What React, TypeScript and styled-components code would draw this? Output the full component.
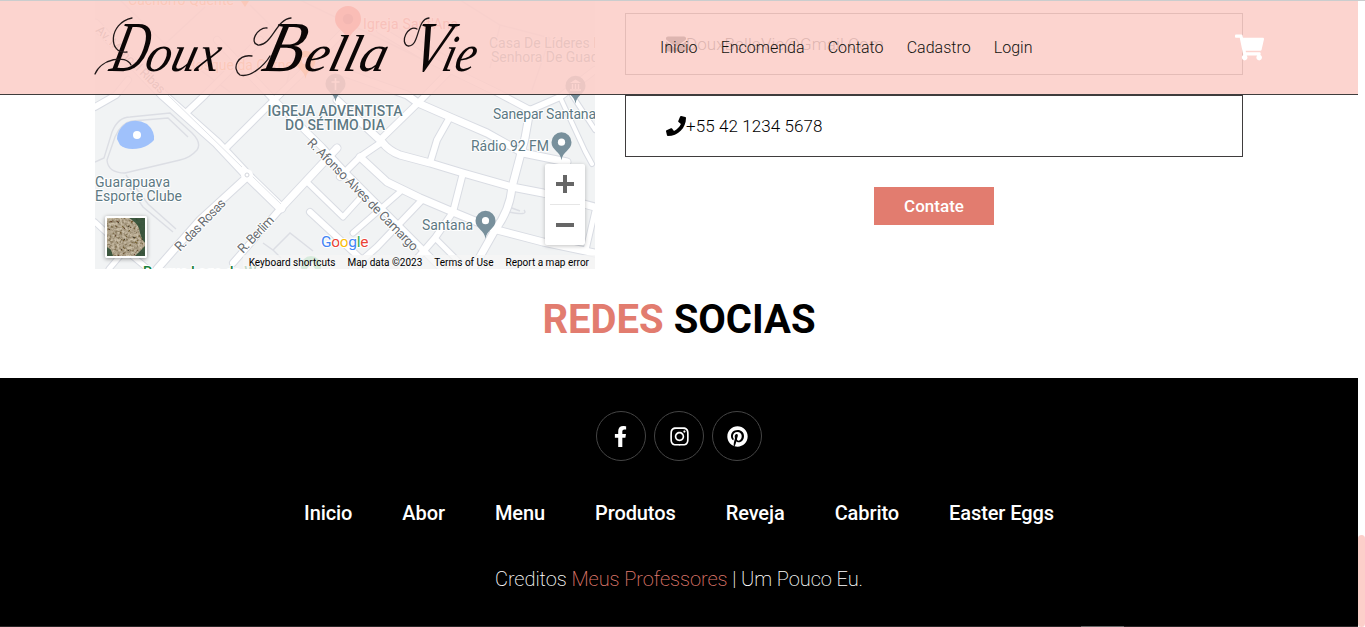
import React from 'react';
import styled, { createGlobalStyle } from 'styled-components';
import {
  FaEnvelope,
  FaFacebookF,
  FaInstagram,
  FaPhone,
  FaPinterest,
  FaShoppingCart,
} from 'react-icons/fa';

const GlobalStyle = createGlobalStyle`
  * { box-sizing: border-box; margin: 0; padding: 0; }
  html, body { height: 627px; overflow: hidden; }
  body { background: #fff; font-family: Roboto, sans-serif; color: #000; }
  a { text-decoration: none; color: inherit; }
`;

const Window = styled.div`
  position: relative;
  display: flex;
  width: 1365px;
  height: 627px;
  border-top: 1px solid #cacdce;
  overflow: hidden;
`;

const Page = styled.div`
  width: 1358px;
  display: flex;
  flex-direction: column;
`;

const ScrollTrack = styled.div`
  width: 7px;
  padding-top: 534px;
  background: #fff;
`;

const ScrollThumb = styled.div`
  height: 92px;
  border-radius: 4px;
  background: #fccfca;
`;

const Header = styled.header`
  position: absolute;
  top: 0;
  left: 0;
  width: 1358px;
  height: 94px;
  display: flex;
  align-items: center;
  padding: 0 94.5px 0 88px;
  background: rgba(252, 206, 200, 0.88);
  border-bottom: 1px solid #3f3c3d;
`;

const Logo = styled.svg`
  width: 400px;
  height: 80px;
  flex: none;
`;

const Nav = styled.nav`
  display: flex;
  gap: 23.2px;
  margin-left: 172px;
  font-size: 16px;
  font-weight: 300;
  color: #13130f;
`;

const Cart = styled.a`
  display: flex;
  margin-left: auto;
  color: #fff;
  font-size: 29px;
`;

const Contact = styled.section`
  display: flex;
  height: 268px;
  padding-left: 95px;
`;

const MapPanel = styled.div`
  position: relative;
  width: 500px;
  height: 268px;
  overflow: hidden;
  background: #f1f3f4;
`;

const MapDrawing = styled.svg`
  display: block;
  width: 500px;
  height: 268px;
`;

const MapFooter = styled.div`
  position: absolute;
  right: 0;
  bottom: 0;
  height: 14px;
  display: flex;
  align-items: center;
  gap: 12px;
  padding: 0 6px;
  background: rgba(245, 245, 245, 0.75);
  font-size: 10px;
  white-space: nowrap;
`;

const Satellite = styled.svg`
  position: absolute;
  left: 10px;
  top: 215px;
  width: 42px;
  height: 42px;
  border: 2px solid #fff;
  border-radius: 2px;
  box-shadow: 0 1px 4px rgba(0, 0, 0, 0.4);
`;

const ZoomControl = styled.div`
  position: absolute;
  left: 450px;
  top: 163px;
  width: 40px;
  height: 81px;
  display: flex;
  flex-direction: column;
  align-items: center;
  background: #fff;
  border-radius: 2px;
  box-shadow: 0 1px 4px rgba(0, 0, 0, 0.25);
`;

const ZoomButton = styled.button`
  width: 40px;
  height: 40px;
  border: 0;
  background: none;
  display: flex;
  align-items: center;
  justify-content: center;
`;

const ZoomRule = styled.div`
  width: 30px;
  height: 1px;
  background: #e6e6e6;
`;

const Form = styled.div`
  width: 618px;
  margin-left: 30px;
  padding-top: 12px;
  display: flex;
  flex-direction: column;
  align-items: center;
`;

const Field = styled.div`
  width: 618px;
  height: 62px;
  margin-bottom: 20px;
  padding-left: 40px;
  display: flex;
  align-items: center;
  border: 1px solid #3f3c3d;
  font-size: 17px;
  letter-spacing: 0.08px;
  font-weight: 300;

  svg {
    font-size: 20px;
  }
`;

const Submit = styled.button`
  width: 120px;
  height: 38px;
  margin-top: 10px;
  border: 0;
  background: #e27c6f;
  color: #fff;
  font: 500 17px Roboto, sans-serif;
`;

const Title = styled.h2`
  height: 109px;
  padding-top: 27px;
  text-align: center;
  font-size: 40px;
  line-height: 48px;
  font-weight: 700;
`;

const Accent = styled.span`
  color: #e27c6f;
`;

const Footer = styled.footer`
  flex: 1;
  display: flex;
  flex-direction: column;
  align-items: center;
  background: #000;
  color: #fff;
  padding-top: 33px;
`;

const Socials = styled.div`
  display: flex;
  gap: 8px;
`;

const Social = styled.a<{ $nudge?: boolean }>`
  width: 50px;
  height: 50px;
  display: flex;
  align-items: center;
  justify-content: center;
  padding-right: ${(p) => (p.$nudge ? 1 : 0)}px;
  border: 1px solid #454545;
  border-radius: 50%;
  font-size: 21px;
`;

const FooterNav = styled.nav`
  display: flex;
  gap: 50px;
  margin-top: 40px;
  font-size: 20px;
  line-height: 24px;
  font-weight: 500;
  letter-spacing: -0.09px;
`;

const Credit = styled.p`
  margin-top: 42px;
  font-size: 20px;
  line-height: 24px;
  font-weight: 200;
  letter-spacing: -0.07px;
`;

const BottomEdge = styled.div`
  width: 100%;
  height: 1px;
  margin-top: auto;
  padding-left: 1081px;
  background: #292526;
`;

const BottomMark = styled.div`
  width: 43px;
  height: 1px;
  background: #656565;
`;

const roads: { d: string; w: number }[] = [
  { d: 'M95 107L116 95L128 80', w: 6 },
  { d: 'M95 24L163 95L217 143L247 175L281 208', w: 9 },
  { d: 'M187 112L205 95L260 40', w: 6 },
  { d: 'M227 147L274 100L305 70L345 30', w: 6 },
  { d: 'M217 40L274 100L322 147L345 172L420 247L442 269', w: 6 },
  { d: 'M247 177L200 220L157 269', w: 7 },
  { d: 'M281 208L323 163L337 148', w: 7 },
  { d: 'M281 208L233 263', w: 6 },
  { d: 'M307 182L343 217L362 196', w: 5 },
  { d: 'M310 212L375 272', w: 6 },
  { d: 'M337 100L382 142Q389 151 400 155L430 163L463 173L512 187L543 193L595 207', w: 7 },
  { d: 'M380 140L418 103L470 50', w: 6 },
  { d: 'M337 70L407 95L418 103L450 117L487 133L523 153L567 162', w: 7 },
  { d: 'M380 30L430 60L498 93L530 110L560 97L595 70', w: 6 },
  { d: 'M530 110L525 138L512 187Q510 210 495 230L473 269', w: 7 },
  { d: 'M450 117L437 140L430 163', w: 6 },
  { d: 'M340 177L360 157L382 142', w: 6 },
  { d: 'M360 157L387 182L420 198L453 212L497 230L543 242L595 253', w: 7 },
  { d: 'M463 173L453 212L435 238L408 269', w: 6 },
  { d: 'M435 238L466 269', w: 5 },
  { d: 'M400 192L353 233', w: 5 },
  { d: 'M422 200L377 247L352 269', w: 6 },
  { d: 'M595 211L586 250', w: 5 },
  { d: 'M95 222L125 250L148 269M125 250L109 269', w: 5 },
  { d: 'M560 97L585 151L592 164M572 95L595 130', w: 4 },
];

const paths = [
  'M95 162L104 158L112 132Q118 117 130 117L170 113L192 133Q202 143 197 150Q190 158 180 160L125 173Q108 173 107 160L115 137Q121 123 132 121L168 118L188 137',
  'M123 178L143 207L173 232M126 175L148 204L176 229',
  'M263 243L273 250L290 233L313 251M273 250L281 258',
  'M509 207L520 211M509 212Q529 216 524 210',
  'M120 0L165 44L205 7M165 44L230 92M250 5L295 50L285 90M300 0L430 63M460 0L500 25L550 38M550 38L532 90M500 25L490 68M398 28L450 58',
];

type PinProps = { x: number; y: number; fill?: string };
const Pin = ({ x, y, fill = '#78909c' }: PinProps) => (
  <g transform={`translate(${x + 0.5} ${y + 0.7})`}>
    <path d="M0 18C-1 9-10 8-10 0A10 10 0 0 1 10 0C10 8 1 9 0 18Z" fill={fill} />
    <circle r="3.6" fill="#fff" />
  </g>
);

const MapLabel = styled.text<{ $color?: string; $size?: number; $weight?: number }>`
  font-family: Roboto, sans-serif;
  font-size: ${(p) => p.$size ?? 14}px;
  font-weight: ${(p) => p.$weight ?? 400};
  fill: ${(p) => p.$color ?? '#5d7983'};
  stroke: #fff;
  stroke-width: 2px;
  stroke-linejoin: round;
  paint-order: stroke;
`;

const LogoWord = styled.text`
  font-family: 'Liberation Serif', serif;
  font-style: italic;
  fill: #0b0606;
`;

const CityMap = () => (
  <MapPanel>
    <MapDrawing viewBox="95 1 500 268">
      <g fill="none" stroke="#dcdee4" strokeWidth="1.4">
        {paths.map((d) => <path key={d} d={d} />)}
      </g>
      <g fill="none" stroke="#d9dce3" strokeLinejoin="round" strokeLinecap="round">
        {roads.map((r) => <path key={r.d} d={r.d} strokeWidth={r.w + 2} />)}
      </g>
      <g fill="none" stroke="#fff" strokeLinejoin="round" strokeLinecap="round">
        {roads.map((r) => <path key={r.d} d={r.d} strokeWidth={r.w} />)}
      </g>
      <path d="M168 95L242 167M252 176L281 204" stroke="#e1e4e9" />
      <circle cx="247" cy="175" r="6" fill="#fff" />
      <circle cx="247" cy="175" r="2" fill="#fff" stroke="#d3d6dc" />
      <path d="M117 139Q117 130 126 123Q136 118 147 124Q155 131 154 140Q150 145 141 148Q127 151 120 145Z" fill="#9fc1fb" />
      <circle cx="137" cy="135" r="4" fill="#fff" />

      <MapLabel x="128" y="5" $color="#f29b4c" textLength="106">Cachorro Quente</MapLabel>
      <path d="M241 1L245 7L249 1Z" fill="#f29b4c" />
      <MapLabel x="187" y="70" $color="#f29b4c" textLength="106">Bosque da Carne</MapLabel>
      <Pin x={305} y={60} fill="#f59a35" />
      <g transform="translate(348 19) scale(1.3)">
        <path d="M0 18C-1 9-10 8-10 0A10 10 0 0 1 10 0C10 8 1 9 0 18Z" fill="#ea4335" />
        <circle r="4" fill="#b31412" />
      </g>
      <MapLabel x="363" y="29" $color="#d96055" textLength="95">Igreja Sant'Ana</MapLabel>
      <MapLabel x="489" y="48">Casa De Líderes N</MapLabel>
      <MapLabel x="491" y="62">Senhora De Guadalupe</MapLabel>
      <MapLabel transform="translate(95 31) rotate(44)" $size={12.5} $color="#7d8084" textLength="91">Av. Manoel Ribas</MapLabel>
      <Pin x={335} y={83} />
      <circle cx="335.5" cy="84" r="5" fill="#78909c" />
      <path d="M335.5 78V90M331.5 82H339.5" stroke="#fff" strokeWidth="1.6" />
      <Pin x={575} y={85} />
      <circle cx="575.5" cy="86" r="5" fill="#78909c" />
      <path d="M570 83L575.5 79.5L581 83Z" fill="#fff" />
      <path d="M572.5 84V89M575.5 84V89M578.5 84V89M570 90H581" stroke="#fff" strokeWidth="1.4" />
      <MapLabel x="335" y="116" textAnchor="middle" $weight={500} textLength="135">IGREJA ADVENTISTA</MapLabel>
      <MapLabel x="335" y="130" textAnchor="middle" $weight={500} textLength="100">DO SÉTIMO DIA</MapLabel>
      <MapLabel x="493" y="119" textLength="103">Sanepar Santana</MapLabel>
      <MapLabel x="471" y="151" textLength="78">Rádio 92 FM</MapLabel>
      <Pin x={561} y={141.5} />
      <MapLabel x="422" y="230" textLength="51">Santana</MapLabel>
      <Pin x={485} y={220} />
      <MapLabel x="95" y="187" textLength="75">Guarapuava</MapLabel>
      <MapLabel x="95" y="201" textLength="87">Esporte Clube</MapLabel>
      <MapLabel transform="translate(180 252) rotate(-46)" $size={13} $color="#686c70" textLength="67">R. das Rosas</MapLabel>
      <MapLabel transform="translate(243 254) rotate(-46)" $size={13} $color="#686c70" textLength="46">R. Berlim</MapLabel>
      <MapLabel transform="translate(306.5 143.5) rotate(45.5)" $size={13} $color="#686c70" textLength="152">R. Afonso Alves de Camargo</MapLabel>
      <MapLabel x="143" y="277" $color="#188038" $weight={500}>Parque Lago da W</MapLabel>
      <circle cx="311" cy="266" r="10" fill="#81c995" />
      <path d="M311 260L315 266H313L316 270H306L309 266H307Z" fill="#fff" />
      <text x="321" y="247" fontFamily="Roboto, sans-serif" fontSize="15.5" fontWeight="400" textLength="47.5" stroke="#fff" strokeWidth="2" paintOrder="stroke">
        <tspan fill="#4285f4">G</tspan><tspan fill="#ea4335">o</tspan><tspan fill="#fbbc05">o</tspan><tspan fill="#4285f4">g</tspan><tspan fill="#34a853">l</tspan><tspan fill="#ea4335">e</tspan>
      </text>
    </MapDrawing>
    <Satellite viewBox="0 0 38 38">
      <filter id="town">
        <feTurbulence type="fractalNoise" baseFrequency="0.38" numOctaves="3" seed="5" />
        <feColorMatrix values="1.8 0 0 0 -0.35  1.7 0 0 0 -0.38  1.5 0 0 0 -0.4  0 0 0 0 1" />
      </filter>
      <rect width="38" height="38" fill="#978a70" />
      <rect width="38" height="38" filter="url(#town)" opacity=".5" />
      <path d="M22 0H38V25Q33 19 32 10Q29 4 22 0ZM28 38L38 28V38ZM0 29L4 32L6 38H0Z" fill="#304f36" opacity=".9" />
    </Satellite>
    <ZoomControl>
      <ZoomButton aria-label="Zoom in">
        <svg width="18" height="18"><path d="M0 9H18M9 0V18" stroke="#666" strokeWidth="4" /></svg>
      </ZoomButton>
      <ZoomRule />
      <ZoomButton aria-label="Zoom out">
        <svg width="18" height="18"><path d="M0 9H18" stroke="#666" strokeWidth="4" /></svg>
      </ZoomButton>
    </ZoomControl>
    <MapFooter>
      <span>Keyboard shortcuts</span>
      <span>Map data ©2023</span>
      <span>Terms of Use</span>
      <span>Report a map error</span>
    </MapFooter>
  </MapPanel>
);

const BrandLogo = () => (
  <Logo viewBox="88 7 400 80">
    <g transform="translate(0 70) skewX(-14)">
      <LogoWord x="108" y="0" fontSize="72" textLength="36" lengthAdjust="spacingAndGlyphs">D</LogoWord>
      <LogoWord x="143" y="0" fontSize="52" textLength="74" lengthAdjust="spacingAndGlyphs">oux</LogoWord>
      <LogoWord x="260" y="0" fontSize="72" textLength="40" lengthAdjust="spacingAndGlyphs">B</LogoWord>
      <LogoWord x="302" y="0" fontSize="52" textLength="82" lengthAdjust="spacingAndGlyphs">ella</LogoWord>
      <LogoWord x="408" y="0" fontSize="72" textLength="35" lengthAdjust="spacingAndGlyphs">V</LogoWord>
      <LogoWord x="440" y="0" fontSize="52" textLength="33" lengthAdjust="spacingAndGlyphs">ie</LogoWord>
    </g>
    <g fill="none" stroke="#21191a" strokeWidth="1.3" strokeLinecap="round">
      <path d="M95 73C101 58 126 53 131 64M127 51C108 54 108 22 132 17" />
      <path d="M267 27C257 26 249 42 258 44C272 45 276 18 291 17M252 55C238 53 231 67 240 74C250 77 264 65 270 55" />
      <path d="M417 28C408 23 399 42 408 45C420 46 416 18 429 17" />
    </g>
  </Logo>
);

export default function App() {
  return (
    <Window>
      <GlobalStyle />
      <Page>
        <Contact>
          <CityMap />
          <Form>
            <Field><FaEnvelope /><span>DouxBellaVie@Gmail.Com</span></Field>
            <Field><FaPhone /><span>+55 42 1234 5678</span></Field>
            <Submit>Contate</Submit>
          </Form>
        </Contact>
        <Title><Accent>REDES</Accent> SOCIAS</Title>
        <Footer>
          <Socials>
            <Social href="#" aria-label="Facebook" $nudge><FaFacebookF /></Social>
            <Social href="#" aria-label="Instagram"><FaInstagram /></Social>
            <Social href="#" aria-label="Pinterest"><FaPinterest /></Social>
          </Socials>
          <FooterNav>
            {['Inicio', 'Abor', 'Menu', 'Produtos', 'Reveja', 'Cabrito', 'Easter Eggs'].map((t) => (
              <a key={t} href="#">{t}</a>
            ))}
          </FooterNav>
          <Credit>Creditos <Accent>Meus Professores</Accent> | Um Pouco Eu.</Credit>
          <BottomEdge><BottomMark /></BottomEdge>
        </Footer>
      </Page>
      <ScrollTrack><ScrollThumb /></ScrollTrack>
      <Header>
        <BrandLogo />
        <Nav>
          {['Inicio', 'Encomenda', 'Contato', 'Cadastro', 'Login'].map((t) => (
            <a key={t} href="#">{t}</a>
          ))}
        </Nav>
        <Cart href="#" aria-label="Carrinho"><FaShoppingCart /></Cart>
      </Header>
    </Window>
  );
}
